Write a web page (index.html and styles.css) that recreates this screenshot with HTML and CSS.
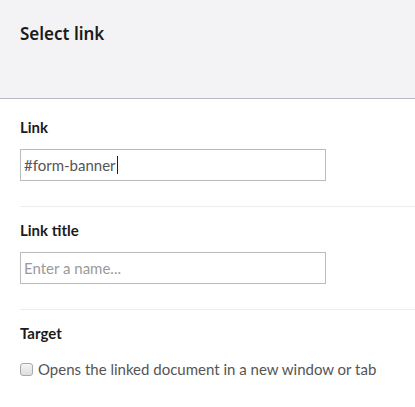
FILE: index.html
```html
<!DOCTYPE html>
<html lang="en">
<head>
<meta charset="utf-8">
<title>Select link</title>
<link rel="stylesheet" href="styles.css">
</head>
<body>
<div class="dialog">
  <header class="dialog-header">
    <h1 class="dialog-title">Select link</h1>
  </header>
  <div class="dialog-body">
    <section class="field">
      <label class="field-label">Link</label>
      <div class="text-input"><span class="value">#form-banner</span><span class="caret"></span></div>
    </section>
    <section class="field">
      <label class="field-label">Link title</label>
      <div class="text-input"><span class="placeholder">Enter a name...</span></div>
    </section>
    <section class="field field-last">
      <label class="field-label">Target</label>
      <label class="check-row"><span class="checkbox"></span><span class="check-text">Opens the linked document in a new window or tab</span></label>
    </section>
  </div>
</div>
</body>
</html>
```
FILE: styles.css
```css
* { box-sizing: border-box; }
html, body { margin: 0; padding: 0; background: #fff; }
body { font-family: Lato, "Open Sans", sans-serif; color: #1b1b1b; }

.dialog { width: 415px; }

.dialog-header {
  height: 99px;
  background: #f3f3f5;
  border-bottom: 1px solid #b9b6c8;
  padding: 22px 20px 0;
}
.dialog-title {
  margin: 0;
  font-family: "Noto Sans", "Open Sans", sans-serif;
  font-size: 17px;
  line-height: 24px;
  font-weight: 600;
  color: #1b1b1b;
}

.dialog-body { padding-top: 5px; }

.field {
  margin-left: 20px;
  padding: 13px 0 25px;
  border-bottom: 1px solid #ececec;
  display: flex;
  flex-direction: column;
  align-items: flex-start;
}
.field-last { border-bottom: none; }

.field-label {
  font-size: 15px;
  line-height: 20px;
  font-weight: 700;
  color: #1b1b1b;
  margin-bottom: 12px;
}

.text-input {
  width: 306px;
  height: 32px;
  border: 1px solid #bbbbbb;
  padding: 0 3px;
  font-size: 15px;
  line-height: 30px;
  color: #555;
  display: flex;
  align-items: center;
}
.placeholder { color: #9a9a9a; }
.caret {
  display: inline-block;
  width: 1px;
  height: 18px;
  background: #222;
  margin-left: 1px;
}

.check-row {
  display: flex;
  align-items: center;
  margin-top: 4px;
  font-size: 15px;
  line-height: 20px;
  color: #555;
}
.checkbox {
  width: 13px;
  height: 13px;
  border: 1px solid #a9a9a9;
  border-radius: 3px;
  background: linear-gradient(#f4f4f4, #dedede);
  margin-right: 5px;
  margin-top: 1px;
}
```
